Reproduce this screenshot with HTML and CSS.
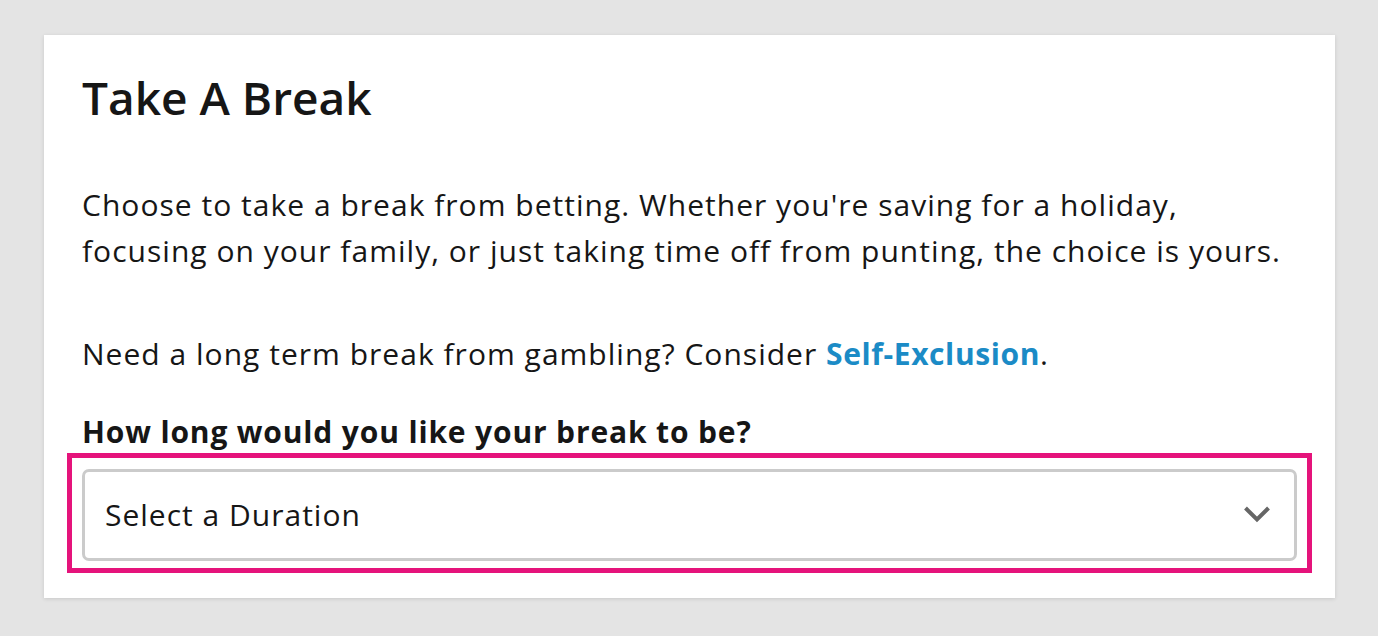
FILE: index.html
```html
<!DOCTYPE html>
<html lang="en">
<head>
<meta charset="utf-8">
<title>Take A Break</title>
<link rel="stylesheet" href="styles.css">
</head>
<body>
<div class="stage">
  <section class="card">
    <h1 class="title">Take A Break</h1>
    <p class="text intro">Choose to take a break from betting. Whether you're saving for a holiday, focusing on your family, or just taking time off from punting, the choice is yours.</p>
    <p class="text note">Need a long term break from gambling? Consider <a class="link" href="#">Self-Exclusion</a>.</p>
    <label class="label" for="duration">How long would you like your break to be?</label>
    <div class="highlight">
      <div class="select" id="duration">
        <span class="select-text">Select a Duration</span>
        <svg class="chevron" width="28" height="18" viewBox="0 0 28 18" aria-hidden="true">
          <polyline points="2.5,3 14,14.5 25.5,3" fill="none" stroke="#666666" stroke-width="4"/>
        </svg>
      </div>
    </div>
  </section>
</div>
</body>
</html>
```
FILE: styles.css
```css
html, body {
  margin: 0;
  padding: 0;
  background: #ffffff;
}

body {
  font-family: "Open Sans", "Liberation Sans", sans-serif;
  color: #161616;
}

.stage {
  width: 1378px;
  height: 636px;
  background: #e4e4e4;
  box-sizing: border-box;
  padding: 35px 0 0 44px;
}

.card {
  width: 1291px;
  box-sizing: border-box;
  background: #ffffff;
  padding: 34px 38px 25px 38px;
  box-shadow: 0 1px 4px rgba(0, 0, 0, 0.12);
  display: flex;
  flex-direction: column;
}

.title {
  margin: 0 0 55px 0;
  font-size: 46px;
  line-height: 57.6px;
  font-weight: 600;
  letter-spacing: 0;
  color: #161616;
}

.text {
  margin: 0;
  font-size: 30px;
  line-height: 46px;
  font-weight: 400;
  letter-spacing: 1.02px;
}

.intro {
  margin-bottom: 57px;
}

.note {
  margin-bottom: 32px;
}

.link {
  color: #1b8bc6;
  font-weight: 700;
  letter-spacing: 0.6px;
  text-decoration: none;
}

.label {
  display: block;
  margin-bottom: -2px;
  font-size: 30px;
  line-height: 46px;
  font-weight: 700;
  letter-spacing: 0.85px;
  color: #161616;
}

.highlight {
  margin: 0 -15px;
  border: 5px solid #e5137b;
  padding: 11px 10px 7px 10px;
}

.select {
  height: 92px;
  box-sizing: border-box;
  border: 3px solid #cbcbcb;
  border-radius: 7px;
  background: #ffffff;
  display: flex;
  align-items: center;
  justify-content: space-between;
  padding: 0 23px 0 20px;
}

.select-text {
  font-size: 30px;
  line-height: 46px;
  letter-spacing: 1px;
  color: #161616;
}

.chevron {
  display: block;
  margin-top: -2px;
}
```
